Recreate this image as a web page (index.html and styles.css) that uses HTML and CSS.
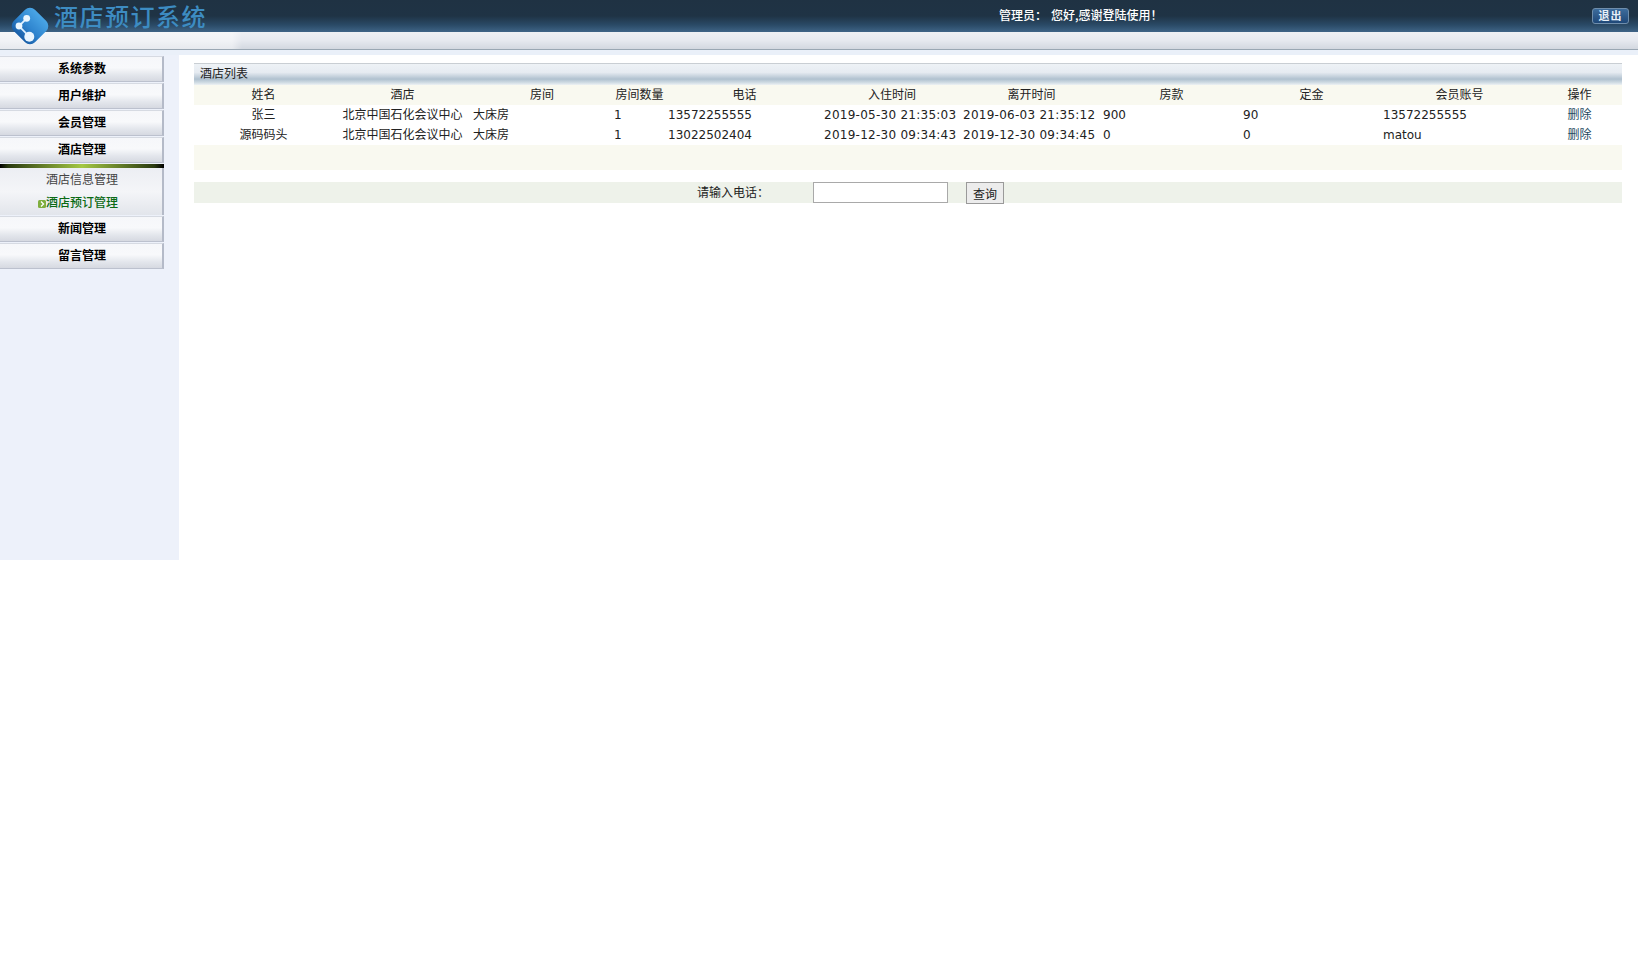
FILE: index.html
```html
<!DOCTYPE html>
<html lang="zh-CN">
<head>
<meta charset="utf-8">
<title>酒店预订系统</title>
<link rel="stylesheet" href="styles.css">
</head>
<body>
<header class="header">
  <svg class="logo" width="42" height="42" viewBox="0 0 42 42" aria-hidden="true">
    <defs>
      <linearGradient id="lg" x1="0" y1="0" x2="0" y2="1">
        <stop offset="0" stop-color="#4aa6e6"/>
        <stop offset="0.55" stop-color="#2f85cf"/>
        <stop offset="1" stop-color="#1a5fa8"/>
      </linearGradient>
    </defs>
    <rect x="6" y="6" width="30" height="30" rx="7" transform="rotate(45 21 21)" fill="url(#lg)"/>
    <path d="M17.7 13.3 L10 21 L20.3 31.7" fill="none" stroke="#dcefff" stroke-width="1.8"/>
    <circle cx="17.7" cy="13.3" r="3.4" fill="#eaf6ff"/>
    <circle cx="10" cy="21" r="3.4" fill="#eaf6ff"/>
    <circle cx="20.3" cy="31.7" r="5" fill="#eaf6ff"/>
  </svg>
  <div class="top">
    <h1 class="brand">酒店预订系统</h1>
    <div class="greeting"><span class="role">管理员：</span><span>您好,感谢登陆使用！</span></div>
    <a class="logout" href="#">退出</a>
  </div>
  <div class="strip"></div>
  <div class="band"></div>
</header>
<div class="layout">
  <nav class="sidebar">
    <a class="menu-item" href="#">系统参数</a>
    <a class="menu-item" href="#">用户维护</a>
    <a class="menu-item" href="#">会员管理</a>
    <a class="menu-item" href="#">酒店管理</a>
    <div class="active-bar"></div>
    <div class="submenu">
      <a class="sub-item" href="#">酒店信息管理</a>
      <a class="sub-item current" href="#"><svg class="arrow" width="8" height="8" viewBox="0 0 8 8" aria-hidden="true"><rect width="8" height="8" rx="1.5" fill="#7fae3e"/><path d="M3 1.5 L5.5 4 L3 6.5" fill="none" stroke="#fff" stroke-width="1.3"/></svg>酒店预订管理</a>
    </div>
    <a class="menu-item" href="#">新闻管理</a>
    <a class="menu-item" href="#">留言管理</a>
  </nav>
  <main class="main">
    <div class="panel-title">酒店列表</div>
    <table class="list">
      <colgroup>
        <col class="c140"><col class="c138"><col class="c141"><col class="c54"><col class="c156"><col class="c139"><col class="c140"><col class="c140"><col class="c140"><col class="c156"><col class="c84">
      </colgroup>
      <thead>
        <tr><th>姓名</th><th>酒店</th><th>房间</th><th>房间数量</th><th>电话</th><th>入住时间</th><th>离开时间</th><th>房款</th><th>定金</th><th>会员账号</th><th>操作</th></tr>
      </thead>
      <tbody>
        <tr><td class="ctr">张三</td><td class="ctr">北京中国石化会议中心</td><td>大床房</td><td>1</td><td>13572255555</td><td class="dt">2019-05-30 21:35:03</td><td class="dt">2019-06-03 21:35:12</td><td>900</td><td>90</td><td>13572255555</td><td class="ctr"><a class="del" href="#">删除</a></td></tr>
        <tr><td class="ctr">源码码头</td><td class="ctr">北京中国石化会议中心</td><td>大床房</td><td>1</td><td>13022502404</td><td class="dt">2019-12-30 09:34:43</td><td class="dt">2019-12-30 09:34:45</td><td>0</td><td>0</td><td>matou</td><td class="ctr"><a class="del" href="#">删除</a></td></tr>
      </tbody>
      <tfoot>
        <tr><td colspan="11"></td></tr>
      </tfoot>
    </table>
    <form class="search">
      <label class="search-label" for="phone">请输入电话：</label>
      <input class="search-input" id="phone" type="text">
      <button class="search-btn" type="button">查询</button>
    </form>
  </main>
</div>
</body>
</html>
```
FILE: styles.css
```css
* { box-sizing: border-box; }
html, body { margin: 0; padding: 0; background: #fff; }
body {
  min-height: 970px;
  font-family: "DejaVu Sans", "Noto Sans CJK SC", sans-serif;
  font-size: 12px;
  color: #222;
}
a { text-decoration: none; color: inherit; }

.header { position: relative; }
.logo { position: absolute; left: 9px; top: 5px; z-index: 2; }
.top {
  height: 32px;
  display: flex;
  align-items: flex-start;
  background: linear-gradient(#1f3243 0, #1f3345 50%, #2a4a66 78%, #3f6486 100%);
}
.brand {
  margin: 2px 0 0 54px;
  width: 945px;
  flex: none;
  font-family: "Noto Sans CJK SC", sans-serif;
  font-size: 24px;
  line-height: 28px;
  font-weight: 500;
  letter-spacing: 1.5px;
  color: #3d8cc2;
}
.greeting {
  margin-top: 6px;
  color: #fff;
  font-weight: 500;
  line-height: 17px;
  white-space: nowrap;
  font-family: "Noto Sans CJK SC", sans-serif;
}
.role { margin-right: 4px; }
.logout {
  margin: 8px 9px 0 auto;
  width: 37px;
  height: 16px;
  border: 1px solid #6f8eac;
  border-radius: 3px;
  background: linear-gradient(#3d6c9c, #1f4878);
  color: #e8f0f8;
  font-family: "Noto Sans CJK SC", sans-serif;
  font-size: 11px;
  font-weight: 700;
  line-height: 13px;
  letter-spacing: 1px;
  text-align: center;
}
.strip {
  height: 18px;
  border-bottom: 1px solid #9aa7b3;
  background:
    linear-gradient(90deg, rgba(255,255,255,.45) 0, rgba(255,255,255,.45) 232px, rgba(255,255,255,0) 242px),
    linear-gradient(#eef0f4 0, #e6e9ef 50%, #d3d8e0 100%);
}
.band { height: 5px; background: #eaf0f9; }

.layout { display: flex; align-items: flex-start; }
.sidebar {
  width: 179px;
  height: 505px;
  flex: none;
  padding: 1px 15px 0 0;
  background: #edf1fa;
  display: flex;
  flex-direction: column;
}
.menu-item {
  height: 26px;
  margin-bottom: 1px;
  display: block;
  padding-left: 2px;
  border-right: 2px solid #b4bac8;
  border-bottom: 1px solid #bcc1ce;
  border-top: 1px solid #d6dae2;
  background: linear-gradient(#f6f7fa 0, #f8f9fb 45%, #e3e6ec 75%, #d6d9e1 100%);
  color: #000;
  font-family: "Noto Sans CJK SC", sans-serif;
  font-weight: 700;
  text-align: center;
  line-height: 22px;
}
.active-bar {
  height: 4px;
  background: linear-gradient(90deg, #000 0, #2a3a10 5%, #a4c844 50%, #2a3a10 94%, #000 100%);
}
.submenu {
  height: 47px;
  margin-bottom: 1px;
  padding-left: 2px;
  border-right: 2px solid #b4bac8;
  background: linear-gradient(#eceef3 0, #f4f5f8 50%, #e2e5eb 100%);
}
.sub-item {
  display: block;
  height: 22px;
  margin-bottom: 1px;
  font-family: "Noto Sans CJK SC", sans-serif;
  text-align: center;
  line-height: 22px;
  color: #444;
}
.sub-item.current { color: #0a6a14; font-weight: 500; }
.arrow { vertical-align: -1px; margin-left: -8px; }

.main { flex: 1; padding: 8px 16px 0 15px; background: #fff; }
.panel-title {
  height: 22px;
  padding-left: 6px;
  border-top: 1px solid #c9ced3;
  background: linear-gradient(#eef2f6 0, #e6ebf1 40%, #b0c1cf 72%, #cfdbe3 88%, #eef2f4 100%);
  font-family: "Noto Sans CJK SC", sans-serif;
  line-height: 18px;
  color: #222;
}
.list {
  width: 100%;
  table-layout: fixed;
  border-collapse: collapse;
}
.c140 { width: 140px; }
.c138 { width: 138px; }
.c141 { width: 141px; }
.c54 { width: 54px; }
.c156 { width: 156px; }
.c139 { width: 139px; }
.c84 { width: 84px; }
.list th, .list td {
  padding: 0 2px 0 1px;
  white-space: nowrap;
  overflow: visible;
  line-height: 20px;
}
.list th {
  height: 20px;
  background: #f9f9f0;
  font-weight: 400;
  text-align: center;
}
.list tbody td { height: 20px; text-align: left; color: #222; }
.list tbody td.ctr { text-align: center; }
.list tbody td.dt { letter-spacing: .26px; }
.list tfoot td { height: 25px; background: #f9f9f0; }
.del { color: #1f4a5e; }

.search {
  height: 21px;
  margin-top: 12px;
  display: flex;
  align-items: flex-start;
  background: #eef2ea;
}
.search-label { margin: 0 44px 0 503px; line-height: 22px; white-space: nowrap; }
.search-input {
  width: 135px;
  height: 21px;
  padding: 0 2px;
  border: 1px solid #a9a9a9;
  background: #fff;
}
.search-btn {
  width: 38px;
  height: 22px;
  margin-left: 18px;
  padding: 0;
  border: 1px solid #9a9a9a;
  background: #ececec;
  font-family: inherit;
  font-size: 12px;
  color: #222;
}
```
